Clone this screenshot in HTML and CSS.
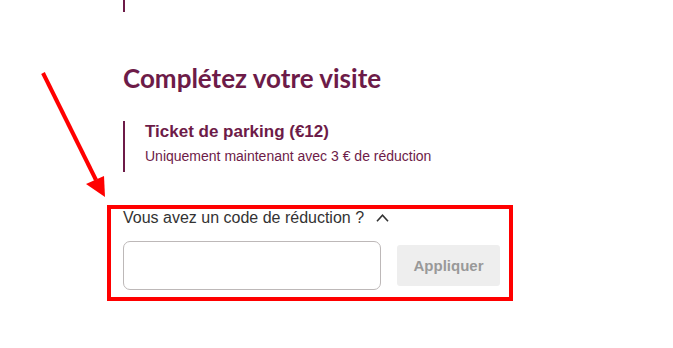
FILE: index.html
```html
<!DOCTYPE html>
<html lang="fr">
<head>
    <meta charset="UTF-8">
    <meta name="viewport" content="width=device-width, initial-scale=1.0">
    <title>Complétez votre visite</title>
    <link rel="stylesheet" href="styles.css">
</head>
<body>

    <div class="page">
        <div class="option option-cut">
            <p class="option-sub">Uniquement parking disponible sur place</p>
        </div>

        <h2 class="section-title">Complétez votre visite</h2>

        <div class="option">
            <h3 class="option-title">Ticket de parking (€12)</h3>
            <p class="option-sub">Uniquement maintenant avec 3 € de réduction</p>
        </div>

        <div class="promo">
            <button class="promo-toggle" type="button">
                Vous avez un code de réduction ?
                <svg class="chevron" width="13" height="8" viewBox="0 0 13 8">
                    <path d="M1 7.2 L6.5 1.2 L12 7.2" fill="none" stroke="#333" stroke-width="1.6"/>
                </svg>
            </button>
            <div class="promo-row">
                <input type="text" class="promo-input">
                <button class="btn-apply" type="button" disabled>Appliquer</button>
            </div>
        </div>
    </div>

    <!-- annotation ajoutée sur la capture -->
    <svg class="arrow" width="673" height="348" viewBox="0 0 673 348">
        <line x1="43" y1="73" x2="96" y2="180" stroke="#ff0000" stroke-width="4"/>
        <polygon points="86,184 104,176 105,197" fill="#ff0000"/>
    </svg>

</body>
</html>
```

FILE: styles.css
```css
body {
    font-family: "Lato", "Noto Sans", sans-serif;
    background-color: #fff;
    margin: 0;
    color: #333;
}
.page {
    padding-left: 123px;
    width: 400px;
}
.option {
    border-left: 2px solid #6d1b48;
    padding: 0 0 7px 20px;
}
.option-cut {
    margin-top: -19px;
    padding: 0 0 0 20px;
    height: 31px;
    overflow: hidden;
}
.option-cut .option-sub {
    line-height: 20px;
}
.option-title {
    font-family: "Liberation Sans", Arial, sans-serif;
    font-size: 17px;
    font-weight: bold;
    color: #6d1b48;
    margin: 0 0 4px;
    line-height: 22px;
}
.option-sub {
    font-family: "Liberation Sans", Arial, sans-serif;
    font-size: 14px;
    color: #6d1b48;
    margin: 0;
    line-height: 18px;
}
.section-title {
    font-family: "Lato", sans-serif;
    font-size: 26px;
    font-weight: bold;
    color: #6d1b48;
    margin: 50px 0 27px;
    line-height: 32px;
}
.promo {
    margin: 33px 0 0 -16px;
    width: 377px;
    border: 4px solid #ff0000;
    padding: 0 9px 7px 12px;
}
.promo-toggle {
    display: flex;
    align-items: center;
    gap: 12px;
    background: none;
    border: none;
    padding: 0;
    font-family: "Liberation Sans", Arial, sans-serif;
    font-size: 16px;
    color: #333;
    line-height: 18px;
    cursor: pointer;
}
.promo-row {
    display: flex;
    align-items: center;
    gap: 16px;
    margin-top: 14px;
}
.promo-input {
    width: 258px;
    height: 49px;
    box-sizing: border-box;
    border: 1px solid #bdb8b8;
    border-radius: 7px;
    padding: 0 12px;
    font-size: 15px;
}
.btn-apply {
    width: 103px;
    height: 41px;
    background-color: #eee;
    border: none;
    border-radius: 3px;
    font-family: "Liberation Sans", Arial, sans-serif;
    font-size: 15px;
    font-weight: bold;
    color: #999;
}
.arrow {
    position: absolute;
    top: 0;
    left: 0;
    pointer-events: none;
}
```
